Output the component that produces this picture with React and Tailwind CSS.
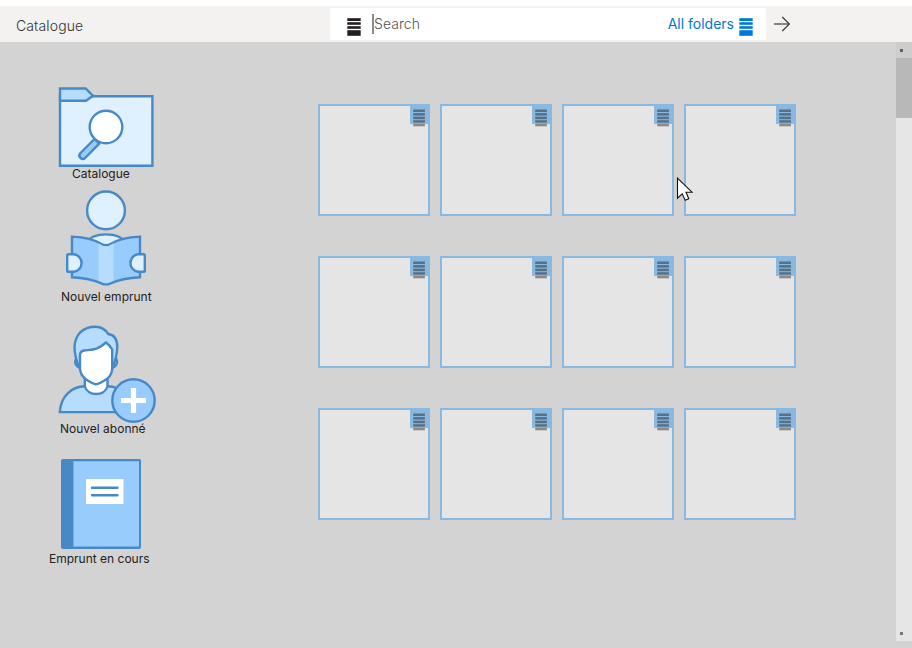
import React from "react";

function SearchBars({ className }) {
  return (
    <svg className={className} width="14" height="18" viewBox="0 0 14 18" fill="currentColor">
      <rect x="0.3" y="0.2" width="13.4" height="2.8" />
      <rect x="0.3" y="4.2" width="13.4" height="2.6" />
      <rect x="0.3" y="8.2" width="13.4" height="2.6" />
      <rect x="0.3" y="12.2" width="13.4" height="5.6" />
    </svg>
  );
}

function Tile() {
  return (
    <div className="h-28 w-28 border-2 border-[#89b9e0] bg-[#e5e5e5]">
      <div className="-mt-0.5 -mr-0.5 ml-auto h-5 w-5 bg-[#89b9e0]">
        <svg width="20" height="24" viewBox="0 0 20 24" className="block max-w-none overflow-visible">
          <g fill="#557187">
            <rect x="3.2" y="5.5" width="11.7" height="2.5" />
            <rect x="3.2" y="9.1" width="11.7" height="2.5" />
            <rect x="3.2" y="12.7" width="11.7" height="2.5" />
            <rect x="3.2" y="16.2" width="11.7" height="2.5" />
          </g>
          <rect x="3.2" y="19.8" width="11.7" height="2.5" fill="#8c8987" />
        </svg>
      </div>
    </div>
  );
}

const stroke = { stroke: "#4788c7", strokeWidth: 2.4 };

function FolderIcon() {
  return (
    <svg className="ml-[58px] block" width="96" height="81" viewBox="0 0 96 81" {...stroke}>
      <path d="M2 10.2H94.4V79.8H2Z" fill="#dff0fe" />
      <path d="M2 2.5H27.7L35 9.8L28 14.8H2Z" fill="#b6dcfe" />
      <path d="M36.5 53L22.3 67.2a3.4 3.4 0 0 0 4.8 4.8L41.2 57.7Z" fill="#98ccfd" />
      <circle cx="48" cy="41" r="16.3" fill="#fff" />
    </svg>
  );
}

function ReaderIcon() {
  return (
    <svg className="ml-[66px] block" width="80" height="97" viewBox="0 0 80 97" {...stroke}>
      <circle cx="40" cy="21.4" r="18.9" fill="#dff0fe" />
      <path d="M20 54C27 42.5 53 42.5 60 54L40 64Z" fill="#dff0fe" />
      <path d="M6 47.6Q25 48.3 35.5 55Q40 57.3 44.5 55Q55 48.3 74 47.6V88.2Q56 89.3 44.5 94.3Q40 96.4 35.5 94.3Q24 89.3 6 88.2Z" fill="#98ccfd" />
      <path d="M32.5 54.3L36 56.4Q40 58.3 44 56.4L47.5 54.3V91.6L44 93.2Q40 95.1 36 93.2L32.5 91.6Z" fill="#b6dcfe" stroke="none" />
      <path d="M2.5 65.2H8A8.9 8.9 0 0 1 8 82.8H2.5Q1.2 82.8 1.2 81.4V66.6Q1.2 65.2 2.5 65.2Z" fill="#dff0fe" />
      <path d="M77.5 65.2H72A8.9 8.9 0 0 0 72 82.8H77.5Q78.8 82.8 78.8 81.4V66.6Q78.8 65.2 77.5 65.2Z" fill="#dff0fe" />
    </svg>
  );
}

function SubscriberIcon() {
  return (
    <svg className="ml-[58px] block" width="99" height="99" viewBox="0 0 99 99" {...stroke}>
      <path d="M1.8 88.1C2.8 72 14 62.3 27 62.3H50C62 62.3 74 73 75 88.1Z" fill="#b6dcfe" />
      <path d="M26.8 50V62.5C30 72.5 46.5 72.5 49.5 62.5V50Z" fill="#fff" />
      <path d="M22 33C16 32 15 43 22.5 43.5ZM54.3 33C60.3 32 61 43 53.8 43.5Z" fill="#b6dcfe" />
      <path d="M21.5 44C18 36 16.5 30 16.5 23C17 10.5 25 2.7 37.5 2.7C44 2.7 47.8 6 50.3 10C57 11 59.5 17 59.3 24C59 32 56.8 38 54.5 44Z" fill="#b6dcfe" />
      <path d="M22 31Q22 27.5 26 26.5C35 25.5 39 26.5 48 18.5Q51.5 21 54.2 25.5V44Q54.2 50.5 49.5 54.5Q41 60.2 37.8 60.2Q35 60.2 27.5 55Q22 50.5 22 44Z" fill="#fff" />
      <circle cx="75.5" cy="76.5" r="21.2" fill="#98ccfd" />
      <path d="M63 76.5H88M75.5 64V89" stroke="#fff" strokeWidth="5.2" fill="none" />
    </svg>
  );
}

function BookIcon() {
  return (
    <svg className="ml-[61px] block" width="80" height="90" viewBox="0 0 80 90">
      <rect width="80" height="90" rx="2" fill="#4788c7" />
      <path d="M12.3 2.2H78V87.6H12.3Z" fill="#98ccfd" />
      <path d="M12.5 2V87.6" stroke="#76addf" />
      <path d="M25 20H62.5V45H25Z" fill="#fff" />
      <path d="M31 28.8H56.5M31 36.2H56.5" stroke="#4788c7" strokeWidth="2.4" strokeLinecap="round" />
    </svg>
  );
}

export default function App() {
  return (
    <div className="relative flex h-[648px] w-[912px] flex-col overflow-hidden bg-[#d3d3d3] font-['Inter',sans-serif] text-[#222]">
      <header className="flex h-[42px] shrink-0 border-t-[6px] border-white bg-[#f3f2f0]">
        <h1 className="w-[330px] pt-[10px] pl-4 text-sm leading-5 font-light tracking-[0.12px] text-[#333]">Catalogue</h1>
        <div className="mt-0.5 flex h-8 w-[436px] rounded-[2px] bg-white">
          <SearchBars className="mt-[10px] ml-[17px] text-[#231f20]" />
          <div className="mt-1.5 ml-[11px] h-5 w-0.5 bg-[#8a8a8a]" />
          <span className="mt-1.5 text-sm leading-5 font-light tracking-[0.05px] text-[#555]">Search</span>
          <span className="mt-1.5 ml-auto text-sm leading-5 font-normal text-[#0078d4]">All folders</span>
          <SearchBars className="mt-[10px] mr-[13px] ml-[5px] text-[#0078d4]" />
        </div>
        <svg className="mt-[9px] ml-2" width="17" height="18" viewBox="0 0 17 18" fill="none">
          <path d="M0 9H15" stroke="#858585" strokeWidth="2" />
          <path d="M8.3 2L15.4 9L8.3 16" stroke="#333" strokeWidth="1.1" />
        </svg>
      </header>

      <div className="flex min-h-0 flex-1">
        <nav className="w-[318px] text-xs leading-4 font-normal">
          <div className="h-[103px] pt-11">
            <FolderIcon />
            <div className="-mt-px pl-[72px] whitespace-nowrap">Catalogue</div>
          </div>
          <div className="mt-11">
            <ReaderIcon />
            <div className="mt-[3px] pl-[61px] whitespace-nowrap">Nouvel emprunt</div>
          </div>
          <div className="mt-[19px]">
            <SubscriberIcon />
            <div className="-mt-0.5 pl-[60px] whitespace-nowrap">Nouvel abonné</div>
          </div>
          <div className="mt-[22px]">
            <BookIcon />
            <div className="mt-0.5 pl-[49px] whitespace-nowrap">Emprunt en cours</div>
          </div>
        </nav>

        <main className="grid grid-cols-[repeat(4,112px)] content-start gap-x-2.5 gap-y-10 pt-[62px]">
          {Array.from({ length: 12 }, (_, i) => <Tile key={i} />)}
        </main>

        <div className="mb-[7px] ml-auto flex w-4 flex-col bg-[#e6e6e6]">
          <div className="h-4 bg-[#cdcdcd] pt-[7px] pl-1">
            <div className="h-[3px] w-[3px] bg-[#606060]" />
          </div>
          <div className="h-[60px] bg-[#b8b8b8]" />
          <div className="mt-auto mb-1.5 ml-1 h-[3px] w-[3px] bg-[#777]" />
        </div>
      </div>

      <svg className="absolute top-[177px] left-[676px]" width="18" height="25" viewBox="0 0 18 25">
        <path d="M1.5 1.2V21.2L6.2 16.8L9.2 23.2L12.8 21.7L10 15.2H16Z" fill="#fff" stroke="#111" strokeWidth="1.1" />
      </svg>
    </div>
  );
}
